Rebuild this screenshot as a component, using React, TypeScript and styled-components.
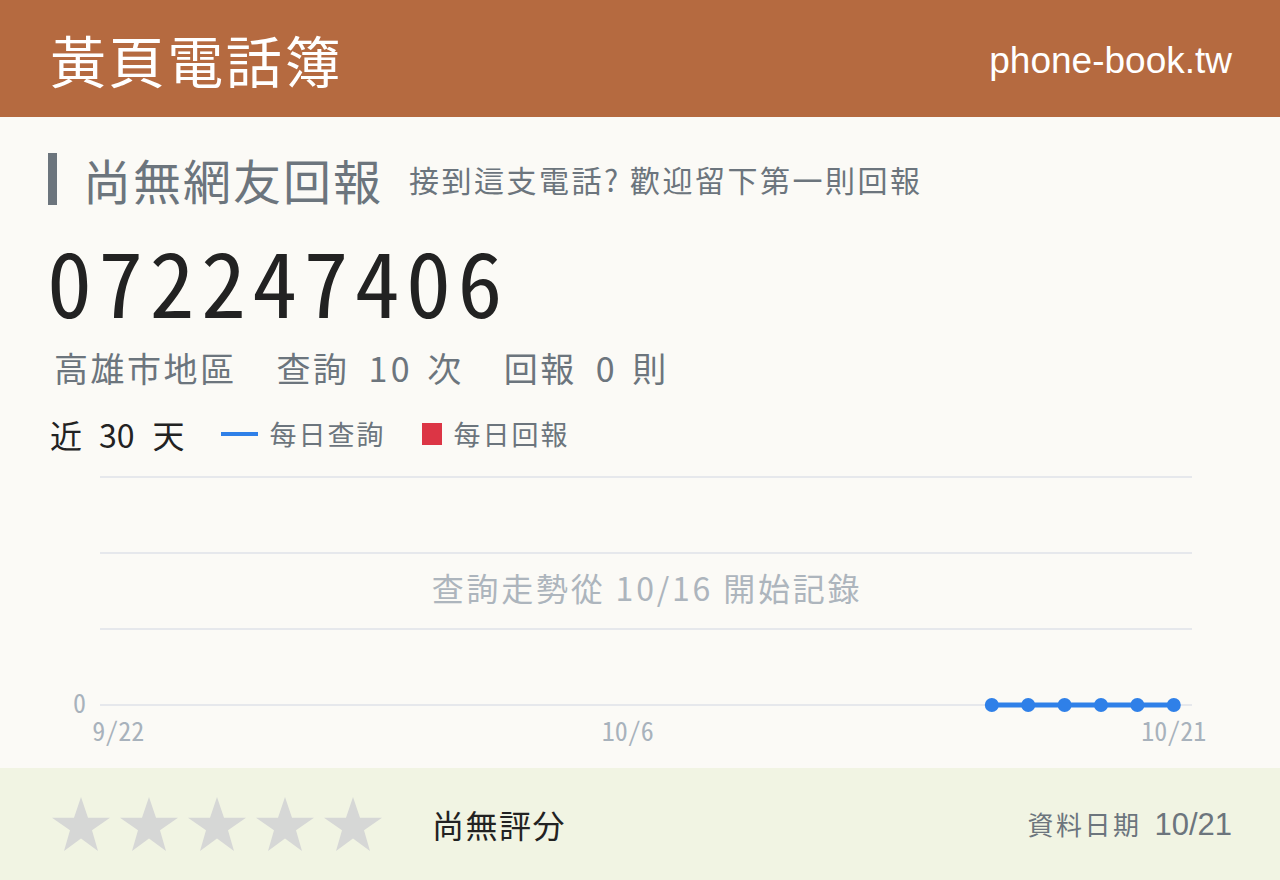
import React from 'react';
import styled, { createGlobalStyle } from 'styled-components';

const GlobalStyle = createGlobalStyle`
  html, body {
    margin: 0;
    padding: 0;
    background: #fbfaf6;
  }
  body {
    font-family: "Noto Sans CJK JP", "Noto Sans CJK TC", sans-serif;
  }
`;

const MONO = `"Noto Sans Mono CJK JP", "DejaVu Sans Condensed", "DejaVu Sans", monospace`;

// chart data: 30 days, counts start on 10/16
const days = Array.from({ length: 30 }, (_, i) => {
  const d = new Date(2023, 8, 22 + i);
  return `${d.getMonth() + 1}/${d.getDate()}`;
});
const firstRecorded = 24;

const CHART_LEFT = 52;
const CHART_WIDTH = 1092;
const BAND = CHART_WIDTH / days.length;
const gridY = [14, 90, 166, 242];

const Star = () => (
  <svg width="58" height="54" viewBox="0 0 58 54">
    <polygon
      points="29,0 36,23 58,23 40,37 46,60 29,46 12,60 18,37 0,23 22,23"
      transform="scale(1 0.9)"
      fill="#d6d7d6"
    />
  </svg>
);

export default function App() {
  const points = days
    .map((_, i) => ({ i, x: CHART_LEFT + BAND / 2 + i * BAND }))
    .filter((p) => p.i >= firstRecorded);

  return (
    <>
      <GlobalStyle />
      <Page>
        <Header>
          <SiteTitle>黃頁電話簿</SiteTitle>
          <Domain>phone-book.tw</Domain>
        </Header>

        <Main>
          <ReportHeading>
            <HeadingText>尚無網友回報</HeadingText>
            <HeadingHint>接到這支電話? 歡迎留下第一則回報</HeadingHint>
          </ReportHeading>

          <PhoneNumber>072247406</PhoneNumber>

          <Stats>
            <span>高雄市地區</span>
            <span>
              查詢<Num>10</Num>次
            </span>
            <span>
              回報<Num>0</Num>則
            </span>
          </Stats>

          <LegendRow>
            <Period>
              近<PeriodNum>30</PeriodNum>天
            </Period>
            <LegendItem>
              <LegendLine />
              每日查詢
            </LegendItem>
            <LegendItem>
              <LegendSquare />
              每日回報
            </LegendItem>
          </LegendRow>

          <Chart width="1184" height="300" viewBox="0 0 1184 300">
            {gridY.map((y) => (
              <line key={y} x1={CHART_LEFT} x2={CHART_LEFT + CHART_WIDTH} y1={y} y2={y} stroke="#e6e8ec" strokeWidth="2" />
            ))}
            <AxisText x="38" y="250" textAnchor="end">0</AxisText>
            {[0, 14, 29].map((i) => (
              <AxisText key={i} x={CHART_LEFT + BAND / 2 + i * BAND} y="278" textAnchor="middle">
                {days[i]}
              </AxisText>
            ))}
            <EmptyNote x="599" y="138" textAnchor="middle">查詢走勢從 10/16 開始記錄</EmptyNote>
            <polyline
              points={points.map((p) => `${p.x},242`).join(' ')}
              fill="none"
              stroke="#2f80e8"
              strokeWidth="5"
            />
            {points.map((p) => (
              <circle key={p.i} cx={p.x} cy="242" r="7" fill="#2f80e8" />
            ))}
          </Chart>
        </Main>

        <Footer>
          <Stars>
            {[0, 1, 2, 3, 4].map((i) => (
              <Star key={i} />
            ))}
          </Stars>
          <RatingText>尚無評分</RatingText>
          <DataDate>
            資料日期<strong>10/21</strong>
          </DataDate>
        </Footer>
      </Page>
    </>
  );
}

const Page = styled.div`
  width: 1280px;
  height: 880px;
  display: flex;
  flex-direction: column;
  overflow: hidden;
`;

const Header = styled.header`
  height: 117px;
  background: #b56a40;
  display: flex;
  align-items: center;
  justify-content: space-between;
  padding: 0 48px 0 52px;
  color: #fff;
  flex-shrink: 0;
`;

const SiteTitle = styled.h1`
  margin: 0 0 0 -2px;
  font-weight: 400;
  font-size: 56px;
  letter-spacing: 2.6px;
  line-height: 1;
`;

const Domain = styled.div`
  font-family: "Liberation Sans", sans-serif;
  font-size: 37px;
  padding-top: 4px;
`;

const Main = styled.main`
  flex: 1;
  padding: 36px 48px 0 48px;
  color: #6c757d;
`;

const ReportHeading = styled.div`
  display: flex;
  align-items: center;
  border-left: 9px solid #6c757d;
  padding-left: 26px;
  height: 52px;
`;

const HeadingText = styled.h2`
  margin: 0;
  font-weight: 400;
  font-size: 48px;
  letter-spacing: 2px;
  line-height: 1;
`;

const HeadingHint = styled.span`
  margin-left: 26px;
  font-size: 30px;
  letter-spacing: 2.5px;
`;

const PhoneNumber = styled.div`
  margin-top: 29px;
  margin-left: -1px;
  font-family: ${MONO};
  font-size: 90px;
  letter-spacing: 6.3px;
  line-height: 1;
  color: #222;
`;

const Stats = styled.div`
  margin-top: 24px;
  padding-left: 6px;
  display: flex;
  gap: 40px;
  font-size: 34px;
  letter-spacing: 2.5px;
  line-height: 1.2;
`;

const Num = styled.span`
  margin: 0 14px 0 19px;
  letter-spacing: 3.5px;
`;

const LegendRow = styled.div`
  margin-top: 26px;
  padding-left: 2px;
  display: flex;
  align-items: center;
  gap: 36px;
  line-height: 1.2;
`;

const Period = styled.span`
  font-size: 32px;
  color: #222;
`;

const PeriodNum = styled.span`
  margin: 0 18px 0 17px;
`;

const LegendItem = styled.span`
  display: flex;
  align-items: center;
  gap: 12px;
  font-size: 27px;
  letter-spacing: 2px;
`;

const LegendLine = styled.i`
  width: 37px;
  height: 4px;
  background: #2f80e8;
`;

const LegendSquare = styled.i`
  width: 20px;
  height: 22px;
  background: #dc3545;
`;

const Chart = styled.svg`
  display: block;
  margin-top: 10px;
`;

const AxisText = styled.text`
  font-family: ${MONO};
  font-size: 26px;
  fill: #a8b2bc;
`;

const EmptyNote = styled.text`
  font-size: 32px;
  letter-spacing: 2.8px;
  fill: #adb5bd;
`;

const Footer = styled.footer`
  height: 112px;
  flex-shrink: 0;
  background: #f1f4e3;
  display: flex;
  align-items: center;
  padding: 0 48px 0 52px;
`;

const Stars = styled.div`
  display: flex;
  gap: 10px;
`;

const RatingText = styled.span`
  margin-left: 50px;
  font-size: 32px;
  letter-spacing: 1.5px;
  color: #222;
`;

const DataDate = styled.div`
  margin-left: auto;
  font-size: 26px;
  letter-spacing: 2.5px;
  color: #6c757d;

  strong {
    font-family: "Liberation Sans", sans-serif;
    font-weight: 400;
    font-size: 31px;
    letter-spacing: 0;
    margin-left: 13px;
  }
`;
